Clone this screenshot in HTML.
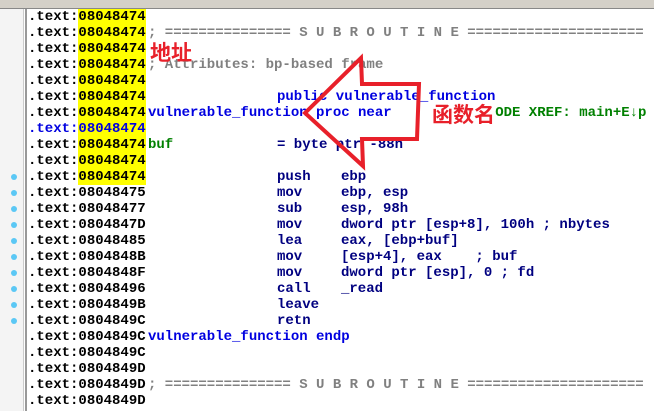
<!DOCTYPE html>
<html><head><style>
body{margin:0;width:654px;height:411px;overflow:hidden;background:#fff;position:relative;font-family:"Liberation Mono",monospace;font-weight:bold;font-size:14px}
.tb{position:absolute;left:0;top:0;width:654px;height:8px;background:#d4d0c8;border-bottom:1px solid #888}
.gut{position:absolute;left:0;top:9px;width:23px;height:402px;background:#f4f4f4;border-right:1px solid #ccc}
.gl{position:absolute;left:25px;top:9px;width:2px;height:402px;background:#999}
.r{position:absolute;height:16px;line-height:16px;white-space:pre}
.y{background:#ff0}
.dot{position:absolute;left:11px;width:6px;height:6px;border-radius:3px;background:#5bc8f5}
.g{color:#808080}.b{color:#0000e0}.n{color:#000080}.gr{color:#008000}
.cn{position:absolute;color:#e8202a;font-family:"Noto Sans CJK SC",sans-serif;font-weight:bold;font-size:21px;line-height:24px}
#wrap{position:absolute;left:0;top:0;width:654px;height:411px;overflow:hidden}
</style></head><body>
<div class="tb"></div>
<div class="gut"></div><div class="gl"></div>
<div id="wrap"></div>
<script>
var addrs=["08048474","08048474","08048474","08048474","08048474","08048474","08048474","08048474","08048474","08048474","08048474","08048475","08048477","0804847D","08048485","0804848B","0804848F","08048496","0804849B","0804849C","0804849C","0804849C","0804849D","0804849D","0804849D"];
var h="";
for(var i=0;i<addrs.length;i++){var t=9+16*i;var col=i==7?"#0000e0":"#000";
h+='<div class="r" style="left:28px;top:'+t+'px;color:'+col+'">.text:<span'+(i<11?' class="y"':'')+'>'+addrs[i]+'</span></div>';
if(i>=10&&i<=19)h+='<div class="dot" style="top:'+(t+5)+'px"></div>';}
function s(i,x,c,txt){h+='<div class="r '+c+'" style="left:'+x+'px;top:'+(9+16*i)+'px">'+txt+'</div>';}
s(1,148,"g","; =============== S U B R O U T I N E =====================");
s(3,148,"g","; Attributes: bp-based frame");
s(5,277,"b","public vulnerable_function");
s(6,148,"b","vulnerable_function proc near");
s(6,470,"gr","; CODE XREF: main+E&#8595;p");
s(8,148,"gr","buf");s(8,277,"n","= byte ptr -88h");
var ins=[[10,"push","ebp"],[11,"mov","ebp, esp"],[12,"sub","esp, 98h"],[13,"mov","dword ptr [esp+8], 100h ; nbytes"],[14,"lea","eax, [ebp+buf]"],[15,"mov","[esp+4], eax    ; buf"],[16,"mov","dword ptr [esp], 0 ; fd"],[17,"call","_read"],[18,"leave",""],[19,"retn",""]];
ins.forEach(function(a){s(a[0],277,"n",a[1]);s(a[0],341,"n",a[2]);});
s(20,148,"b","vulnerable_function endp");
s(23,148,"g","; =============== S U B R O U T I N E =====================");
document.getElementById("wrap").innerHTML=h;
</script>
<div class="cn" style="left:150px;top:40px">地址</div>
<div class="cn" style="left:432px;top:102px;background:#fff">函数名</div>
<svg style="position:absolute;left:0;top:0" width="654" height="411"><polygon points="305,113 361,58 362,84 419,84 417,139 362,139 363,166" fill="none" stroke="#e8202a" stroke-width="4" stroke-linejoin="miter"/></svg>
</body></html>
